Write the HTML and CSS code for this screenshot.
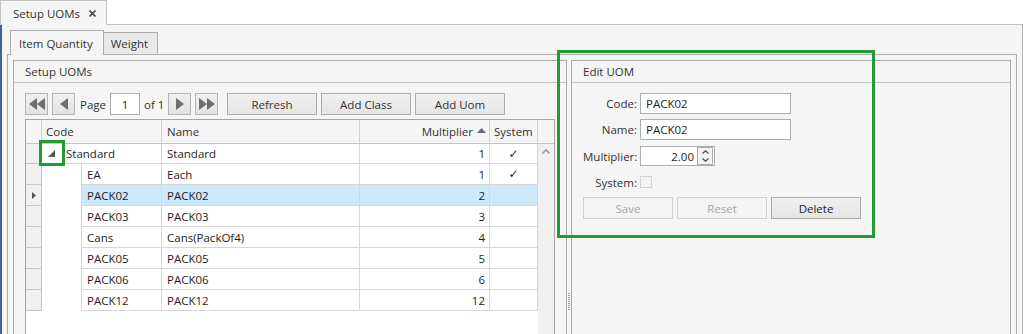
FILE: index.html
```html
<!DOCTYPE html>
<html lang="en">
<head>
    <meta charset="UTF-8">
    <title>Setup UOMs</title>
    <link rel="stylesheet" href="styles.css">
</head>
<body>
    <div class="doc-strip">
        <div class="doc-tab">
            <span>Setup UOMs</span>
            <svg class="close" width="7" height="7" viewBox="0 0 7 7"><path d="M0.5 0.5 L6.5 6.5 M6.5 0.5 L0.5 6.5" stroke="#4a4a4a" stroke-width="1.6"/></svg>
        </div>
    </div>

    <div class="doc">
        <div class="tab-strip">
            <div class="tab active">Item Quantity</div>
            <div class="tab">Weight</div>
        </div>

        <div class="tab-body">
            <div class="group group-left">
                <div class="group-head">Setup UOMs</div>
                <div class="group-body">
                    <div class="pager">
                        <div class="pbtn"><svg width="16" height="12" viewBox="0 0 16 12"><path d="M8 0 V12 L0 6 Z M16 0 V12 L8 6 Z" fill="#6e6e6e"/></svg></div>
                        <div class="pbtn"><svg width="8" height="12" viewBox="0 0 8 12"><path d="M8 0 V12 L0 6 Z" fill="#6e6e6e"/></svg></div>
                        <span class="page-label">Page</span>
                        <div class="page-input">1</div>
                        <span class="of-label">of 1</span>
                        <div class="pbtn"><svg width="8" height="12" viewBox="0 0 8 12"><path d="M0 0 V12 L8 6 Z" fill="#6e6e6e"/></svg></div>
                        <div class="pbtn"><svg width="16" height="12" viewBox="0 0 16 12"><path d="M0 0 V12 L8 6 Z M8 0 V12 L16 6 Z" fill="#6e6e6e"/></svg></div>
                        <div class="btn refresh">Refresh</div>
                        <div class="btn">Add Class</div>
                        <div class="btn">Add Uom</div>
                    </div>

                    <div class="grid">
                        <div class="grid-head">
                            <div class="hc c-rh"></div>
                            <div class="hc c-code">Code</div>
                            <div class="hc c-name">Name</div>
                            <div class="hc c-mult">Multiplier <svg class="sort" width="9" height="5" viewBox="0 0 9 5"><path d="M0 5 L4.5 0 L9 5 Z" fill="#6a6a6a"/></svg></div>
                            <div class="hc c-sys">System</div>
                            <div class="hc c-scroll"></div>
                        </div>
                        <div class="grid-body">
                            <div class="rows">
                                <div class="row first">
                                    <div class="rh"></div>
                                    <div class="cell code-group"><svg class="expander" width="7" height="7" viewBox="0 0 7 7"><path d="M7 0 V7 H0 Z" fill="#555"/></svg>Standard</div>
                                    <div class="cell c-name">Standard</div>
                                    <div class="cell c-mult">1</div>
                                    <div class="cell c-sys">✓</div>
                                </div>
                                <div class="row">
                                    <div class="rh"></div>
                                    <div class="indent"></div>
                                    <div class="cell code-child">EA</div>
                                    <div class="cell c-name">Each</div>
                                    <div class="cell c-mult">1</div>
                                    <div class="cell c-sys">✓</div>
                                </div>
                                <div class="row sel">
                                    <div class="rh"><svg width="4" height="7" viewBox="0 0 4 7"><path d="M0 0 L4 3.5 L0 7 Z" fill="#555"/></svg></div>
                                    <div class="indent"></div>
                                    <div class="cell code-child">PACK02</div>
                                    <div class="cell c-name">PACK02</div>
                                    <div class="cell c-mult">2</div>
                                    <div class="cell c-sys"></div>
                                </div>
                                <div class="row">
                                    <div class="rh"></div>
                                    <div class="indent"></div>
                                    <div class="cell code-child">PACK03</div>
                                    <div class="cell c-name">PACK03</div>
                                    <div class="cell c-mult">3</div>
                                    <div class="cell c-sys"></div>
                                </div>
                                <div class="row">
                                    <div class="rh"></div>
                                    <div class="indent"></div>
                                    <div class="cell code-child">Cans</div>
                                    <div class="cell c-name">Cans(PackOf4)</div>
                                    <div class="cell c-mult">4</div>
                                    <div class="cell c-sys"></div>
                                </div>
                                <div class="row">
                                    <div class="rh"></div>
                                    <div class="indent"></div>
                                    <div class="cell code-child">PACK05</div>
                                    <div class="cell c-name">PACK05</div>
                                    <div class="cell c-mult">5</div>
                                    <div class="cell c-sys"></div>
                                </div>
                                <div class="row">
                                    <div class="rh"></div>
                                    <div class="indent"></div>
                                    <div class="cell code-child">PACK06</div>
                                    <div class="cell c-name">PACK06</div>
                                    <div class="cell c-mult">6</div>
                                    <div class="cell c-sys"></div>
                                </div>
                                <div class="row">
                                    <div class="rh"></div>
                                    <div class="indent"></div>
                                    <div class="cell code-child">PACK12</div>
                                    <div class="cell c-name">PACK12</div>
                                    <div class="cell c-mult">12</div>
                                    <div class="cell c-sys"></div>
                                </div>
                            </div>
                            <div class="vscroll">
                                <svg width="8" height="5" viewBox="0 0 8 5"><path d="M0.5 4.5 L4 1 L7.5 4.5" fill="none" stroke="#9a9a9a" stroke-width="1.6"/></svg>
                            </div>
                        </div>
                    </div>
                </div>
            </div>

            <div class="splitter"><span class="grip"></span></div>

            <div class="group group-right">
                <div class="group-head">Edit UOM</div>
                <div class="form">
                    <div class="frow">
                        <span class="flabel">Code:</span>
                        <div class="finput">PACK02</div>
                    </div>
                    <div class="frow r-name">
                        <span class="flabel">Name:</span>
                        <div class="finput">PACK02</div>
                    </div>
                    <div class="frow r-mult">
                        <span class="flabel">Multiplier:</span>
                        <div class="finput spin">
                            <span class="spin-value">2.00</span>
                            <div class="spinner">
                                <svg width="7" height="4" viewBox="0 0 7 4"><path d="M0.5 3.5 L3.5 0.8 L6.5 3.5" fill="none" stroke="#555" stroke-width="1.3"/></svg>
                                <svg width="7" height="4" viewBox="0 0 7 4"><path d="M0.5 0.5 L3.5 3.2 L6.5 0.5" fill="none" stroke="#555" stroke-width="1.3"/></svg>
                            </div>
                        </div>
                    </div>
                    <div class="frow r-sys">
                        <span class="flabel">System:</span>
                        <span class="check"></span>
                    </div>
                    <div class="frow r-btns">
                        <div class="fbtn disabled">Save</div>
                        <div class="fbtn disabled">Reset</div>
                        <div class="fbtn">Delete</div>
                    </div>
                </div>
            </div>
        </div>
    </div>

    <div class="mark mark-edit"></div>
    <div class="mark mark-expander"></div>
</body>
</html>
```

FILE: styles.css
```css
* {
    box-sizing: border-box;
}

html, body {
    margin: 0;
    padding: 0;
}

body {
    width: 1023px;
    height: 334px;
    overflow: hidden;
    position: relative;
    background: #fff;
    font-family: 'Open Sans', 'Noto Sans', sans-serif;
    font-size: 11.5px;
    color: #1e1e1e;
}

/* document tab */
.doc-strip {
    height: 24px;
    display: flex;
    align-items: flex-end;
}

.doc-tab {
    position: relative;
    z-index: 1;
    width: 107px;
    height: 25px;
    margin-bottom: -1px;
    padding: 0 10px 0 12px;
    display: flex;
    align-items: center;
    justify-content: space-between;
    background: #f5f5f5;
    border: 1px solid #c2c2c2;
    border-bottom: none;
    color: #333;
}

.doc {
    height: 310px;
    overflow: hidden;
    padding: 5px 5px 0 5px;
    background: #f5f5f5;
    border-top: 1px solid #c2c2c2;
    border-left: 2px solid #3f5f9f;
    border-right: 1px solid #b4b4b4;
}

/* inner tabs */
.tab-strip {
    display: flex;
    align-items: flex-end;
    height: 24px;
    margin-left: 3px;
}

.tab {
    height: 22px;
    margin-left: -1px;
    padding: 0 9px 0 7px;
    display: flex;
    align-items: center;
    background: #e9e9e9;
    border: 1px solid #acacac;
    border-bottom: none;
    color: #333;
}

.tab.active {
    position: relative;
    z-index: 1;
    height: 25px;
    margin-left: 0;
    margin-bottom: -1px;
    padding: 0 10px 0 8px;
    background: #f5f5f5;
}

.tab-body {
    display: flex;
    align-items: flex-start;
    padding: 5px;
    background: #f5f5f5;
    border: 1px solid #acacac;
}

/* group boxes */
.group {
    display: flex;
    flex-direction: column;
    height: 320px;
    border: 1px solid #acacac;
}

.group-left {
    width: 554px;
}

.group-right {
    width: 440px;
}

.group-head {
    flex-shrink: 0;
    height: 22px;
    padding-left: 11px;
    display: flex;
    align-items: center;
    border-bottom: 1px solid #c3c3c3;
    color: #333;
}

.group-body {
    flex: 1;
    display: flex;
    flex-direction: column;
    padding: 10px 11px 0;
}

.splitter {
    width: 4px;
    padding-top: 233px;
    display: flex;
    justify-content: center;
}

.grip {
    width: 2px;
    height: 17px;
    background: repeating-linear-gradient(#9c9c9c 0 1px, transparent 1px 2px);
}

/* pager */
.pager {
    flex-shrink: 0;
    display: flex;
    align-items: center;
    gap: 4px;
    height: 22px;
    margin-bottom: 4px;
}

.pager > * {
    flex-shrink: 0;
    white-space: nowrap;
}

.pbtn {
    width: 23px;
    height: 22px;
    display: flex;
    align-items: center;
    justify-content: center;
    background: linear-gradient(#efefef, #e3e3e3);
    border: 1px solid #b5b5b5;
}

.page-label {
    width: 27px;
    padding-left: 1px;
    color: #333;
}

.page-input {
    width: 30px;
    height: 22px;
    display: flex;
    align-items: center;
    justify-content: center;
    background: #fff;
    border: 1px solid #abadb3;
}

.of-label {
    width: 20px;
    color: #333;
}

.btn {
    width: 90px;
    height: 22px;
    display: flex;
    align-items: center;
    justify-content: center;
    background: linear-gradient(#f0f0f0, #e5e5e5);
    border: 1px solid #acacac;
    color: #333;
}

.btn.refresh {
    margin-left: 5px;
}

/* grid */
.grid {
    flex: 1;
    width: 530px;
    display: flex;
    flex-direction: column;
    background: #fff;
    border: 1px solid #a5a5a5;
}

.grid-head {
    flex-shrink: 0;
    display: flex;
    height: 24px;
    background: #f5f5f5;
    border-bottom: 1px solid #c4c4c4;
    color: #333;
}

.hc {
    display: flex;
    align-items: center;
    padding: 0 4px;
    border-right: 1px solid #d0d0d0;
    white-space: nowrap;
}

.c-rh { width: 16px; }
.c-code { width: 120px; }
.c-name { width: 198px; }
.c-mult { width: 130px; justify-content: flex-end; }
.c-sys { width: 48px; }
.c-scroll { width: 16px; border-right: none; }

.hc.c-name { padding-left: 5px; }
.hc.c-mult { padding-right: 3px; }
.sort { margin-left: 4px; margin-bottom: 2px; }

.grid-body {
    flex: 1;
    display: flex;
}

.rows {
    width: 512px;
}

.vscroll {
    width: 16px;
    background: #f0f0f0;
    display: flex;
    justify-content: center;
    align-items: flex-start;
    padding-top: 5px;
}

.row {
    display: flex;
    height: 21px;
}

.row.first {
    height: 20px;
}

.rh {
    width: 16px;
    display: flex;
    align-items: center;
    justify-content: center;
    background: #f0f0f0;
    border-right: 1px solid #c6c6c6;
    border-bottom: 1px solid #c6c6c6;
}

.indent {
    width: 39px;
}

.cell {
    display: flex;
    align-items: center;
    padding: 0 5px;
    white-space: nowrap;
    border-right: 1px solid #d6d6d6;
    border-bottom: 1px solid #d6d6d6;
}

.code-group {
    width: 120px;
    padding-left: 6px;
}

.expander {
    margin-right: 11px;
}

.code-child {
    width: 81px;
    border-left: 1px solid #d6d6d6;
}

.cell.c-mult {
    padding-right: 4px;
}

.cell.c-sys {
    justify-content: center;
    font-family: 'DejaVu Sans', sans-serif;
    font-size: 12px;
}

.sel .cell {
    background: #cce8fb;
}

/* edit form */
.form {
    padding: 10px 0 0 11px;
}

.frow {
    display: flex;
    align-items: center;
    height: 21px;
}

.flabel {
    width: 54px;
    margin-right: 3px;
    text-align: right;
    color: #333;
}

.finput {
    width: 151px;
    height: 21px;
    padding-left: 5px;
    display: flex;
    align-items: center;
    background: #fff;
    border: 1px solid #abadb3;
}

.r-name {
    margin-top: 5px;
}

.r-mult {
    margin-top: 6px;
    height: 20px;
}

.finput.spin {
    width: 75px;
    height: 20px;
    padding: 0 1px 0 0;
    justify-content: flex-end;
}

.spin-value {
    margin-right: 3px;
}

.spinner {
    width: 16px;
    height: 18px;
    display: flex;
    flex-direction: column;
    align-items: center;
    justify-content: space-around;
    background: #f3f3f3;
    border: 1px solid #acacac;
}

.r-sys {
    height: 14px;
    margin-top: 9px;
}

.check {
    width: 12px;
    height: 12px;
    background: #f5f5f5;
    border: 1px solid #d3d3d3;
}

.r-btns {
    height: 22px;
    margin-top: 8px;
    gap: 4px;
}

.fbtn {
    width: 90px;
    height: 22px;
    display: flex;
    align-items: center;
    justify-content: center;
    background: linear-gradient(#f0f0f0, #e5e5e5);
    border: 1px solid #acacac;
    color: #222;
}

.fbtn.disabled {
    background: #f4f4f4;
    border-color: #d0d0d0;
    color: #a6a6a6;
}

/* green call-out boxes drawn over the screen */
.mark {
    position: absolute;
    border: 3px solid #1f9d30;
}

.mark-edit {
    left: 557px;
    top: 50px;
    width: 318px;
    height: 188px;
}

.mark-expander {
    left: 39px;
    top: 140px;
    width: 26px;
    height: 26px;
}
```
